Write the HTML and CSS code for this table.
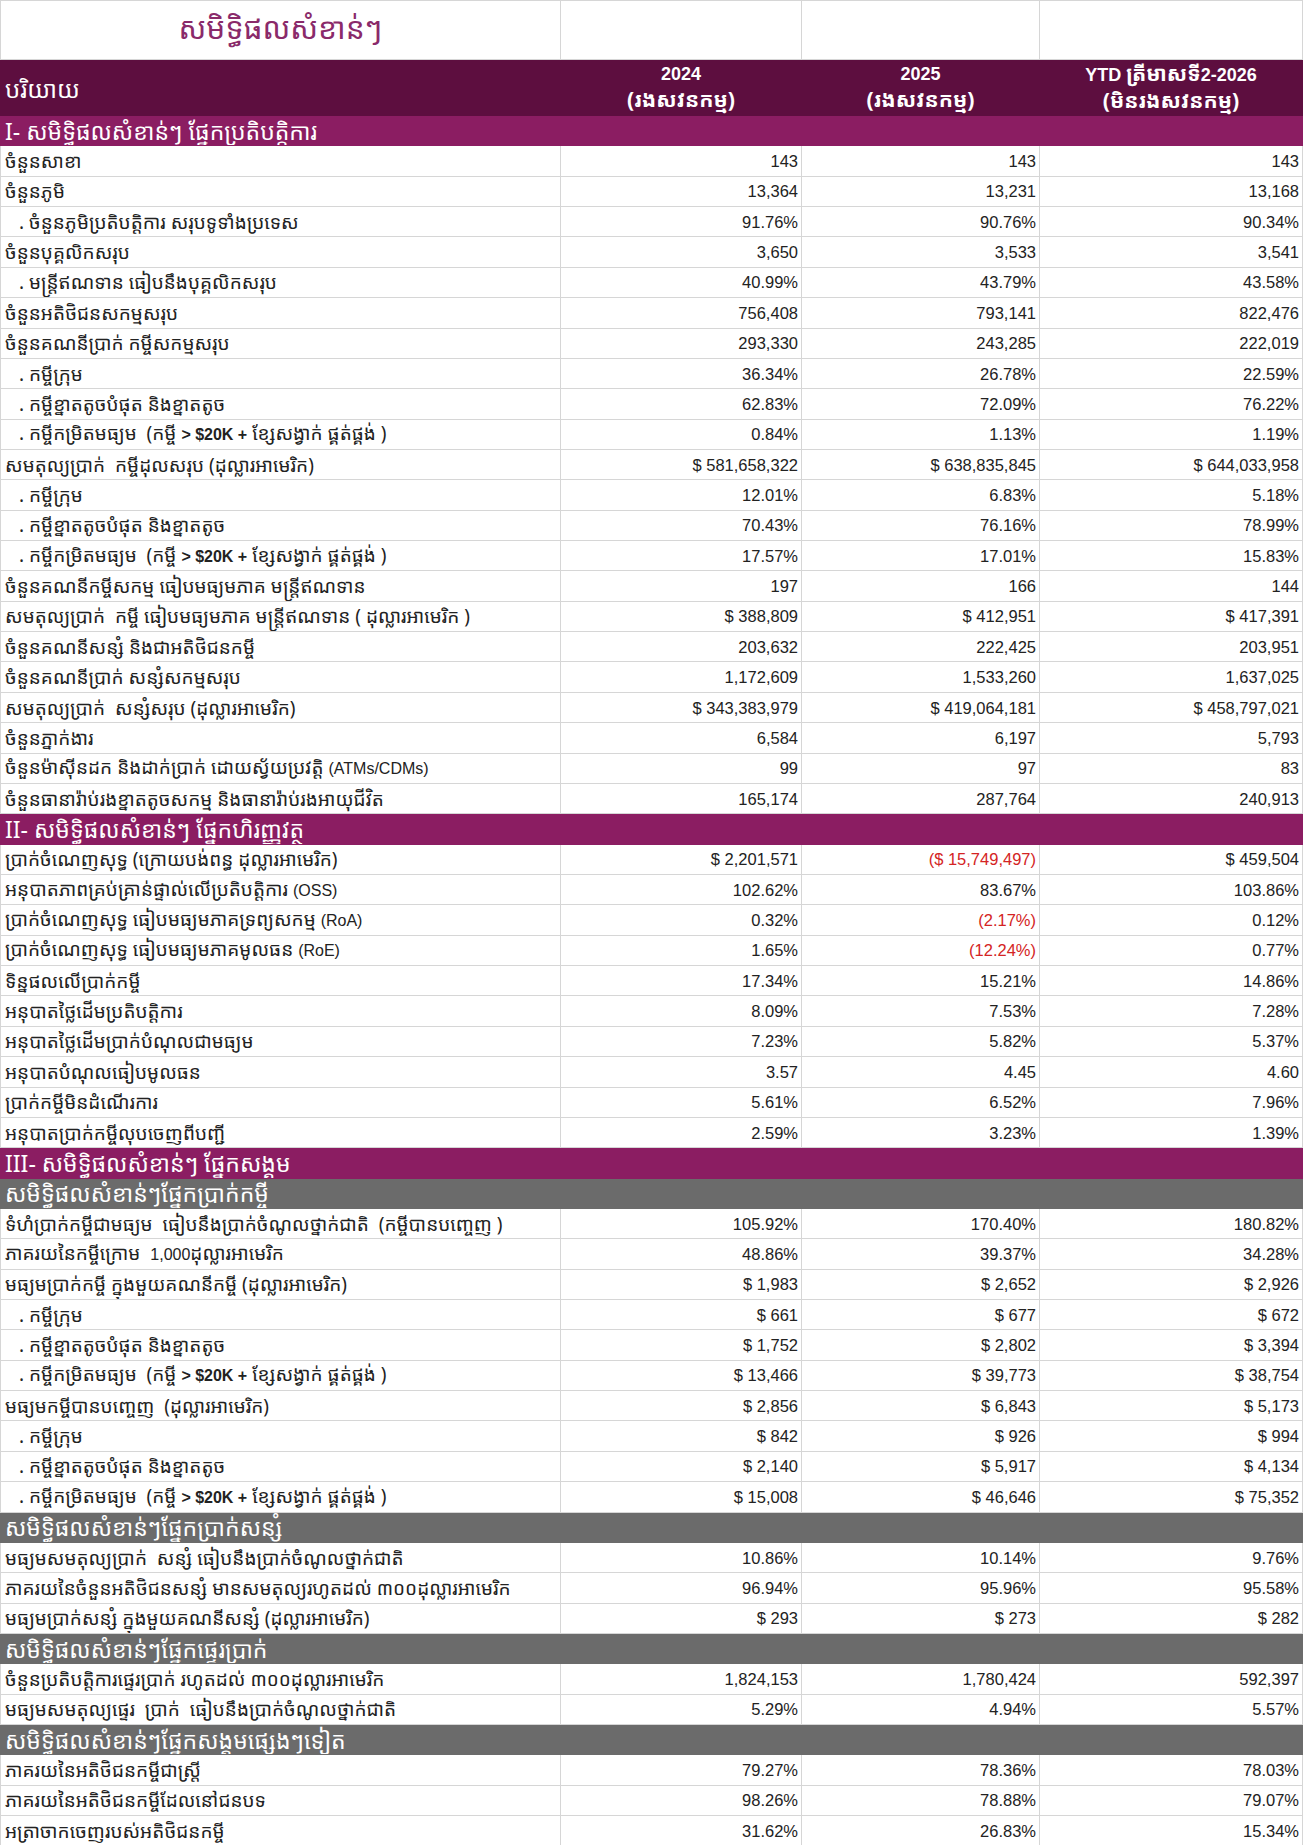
FILE: index.html
```html
<!DOCTYPE html>
<html lang="km">
<head>
<meta charset="utf-8">
<title>សមិទ្ធិផលសំខាន់ៗ</title>
<link rel="stylesheet" href="styles.css">
</head>
<body>
<table class="perf">
  <colgroup>
    <col class="c-label"><col class="c-num"><col class="c-num2"><col class="c-num3">
  </colgroup>
  <tbody>
    <tr class="title-row"><td class="title">សមិទ្ធិផលសំខាន់ៗ</td><td></td><td></td><td></td></tr>
    <tr class="head-row">
      <td class="head-label">បរិយាយ</td>
      <td class="head-col">2024<br><span class="kh">(រងសវនកម្ម)</span></td>
      <td class="head-col">2025<br><span class="kh">(រងសវនកម្ម)</span></td>
      <td class="head-col">YTD <span class="kh">ត្រីមាសទី</span>2-2026<br><span class="kh">(មិនរងសវនកម្ម)</span></td>
    </tr>
    <tr class="sec"><td colspan="4">I- សមិទ្ធិផលសំខាន់ៗ ផ្នែកប្រតិបត្តិការ</td></tr>
    <tr><td>ចំនួនសាខា</td><td>143</td><td>143</td><td>143</td></tr>
    <tr><td>ចំនួនភូមិ</td><td>13,364</td><td>13,231</td><td>13,168</td></tr>
    <tr><td class="sub">. ចំនួនភូមិប្រតិបត្តិការ សរុបទូទាំងប្រទេស</td><td>91.76%</td><td>90.76%</td><td>90.34%</td></tr>
    <tr><td>ចំនួនបុគ្គលិកសរុប</td><td>3,650</td><td>3,533</td><td>3,541</td></tr>
    <tr><td class="sub">. មន្ត្រីឥណទាន ធៀបនឹងបុគ្គលិកសរុប</td><td>40.99%</td><td>43.79%</td><td>43.58%</td></tr>
    <tr><td>ចំនួនអតិថិជនសកម្មសរុប</td><td>756,408</td><td>793,141</td><td>822,476</td></tr>
    <tr><td>ចំនួនគណនីប្រាក់ កម្ចីសកម្មសរុប</td><td>293,330</td><td>243,285</td><td>222,019</td></tr>
    <tr><td class="sub">. កម្ចីក្រុម</td><td>36.34%</td><td>26.78%</td><td>22.59%</td></tr>
    <tr><td class="sub">. កម្ចីខ្នាតតូចបំផុត និងខ្នាតតូច</td><td>62.83%</td><td>72.09%</td><td>76.22%</td></tr>
    <tr><td class="sub">. កម្ចីកម្រិតមធ្យម &nbsp;(កម្ចី <b class="lat">&gt; $20K +</b> ខ្សែសង្វាក់ ផ្គត់ផ្គង់ )</td><td>0.84%</td><td>1.13%</td><td>1.19%</td></tr>
    <tr><td>សមតុល្យប្រាក់ &nbsp;កម្ចីដុលសរុប (ដុល្លារអាមេរិក)</td><td>$ 581,658,322</td><td>$ 638,835,845</td><td>$ 644,033,958</td></tr>
    <tr><td class="sub">. កម្ចីក្រុម</td><td>12.01%</td><td>6.83%</td><td>5.18%</td></tr>
    <tr><td class="sub">. កម្ចីខ្នាតតូចបំផុត និងខ្នាតតូច</td><td>70.43%</td><td>76.16%</td><td>78.99%</td></tr>
    <tr><td class="sub">. កម្ចីកម្រិតមធ្យម &nbsp;(កម្ចី <b class="lat">&gt; $20K +</b> ខ្សែសង្វាក់ ផ្គត់ផ្គង់ )</td><td>17.57%</td><td>17.01%</td><td>15.83%</td></tr>
    <tr><td>ចំនួនគណនីកម្ចីសកម្ម ធៀបមធ្យមភាគ មន្ត្រីឥណទាន</td><td>197</td><td>166</td><td>144</td></tr>
    <tr><td>សមតុល្យប្រាក់ &nbsp;កម្ចី ធៀបមធ្យមភាគ មន្ត្រីឥណទាន ( ដុល្លារអាមេរិក )</td><td>$ 388,809</td><td>$ 412,951</td><td>$ 417,391</td></tr>
    <tr><td>ចំនួនគណនីសន្សំ និងជាអតិថិជនកម្ចី</td><td>203,632</td><td>222,425</td><td>203,951</td></tr>
    <tr><td>ចំនួនគណនីប្រាក់ សន្សំសកម្មសរុប</td><td>1,172,609</td><td>1,533,260</td><td>1,637,025</td></tr>
    <tr><td>សមតុល្យប្រាក់ &nbsp;សន្សំសរុប (ដុល្លារអាមេរិក)</td><td>$ 343,383,979</td><td>$ 419,064,181</td><td>$ 458,797,021</td></tr>
    <tr><td>ចំនួនភ្នាក់ងារ</td><td>6,584</td><td>6,197</td><td>5,793</td></tr>
    <tr><td>ចំនួនម៉ាស៊ីនដក និងដាក់ប្រាក់ ដោយស្វ័យប្រវត្តិ <span class="lat">(ATMs/CDMs)</span></td><td>99</td><td>97</td><td>83</td></tr>
    <tr><td>ចំនួនធានារ៉ាប់រងខ្នាតតូចសកម្ម និងធានារ៉ាប់រងអាយុជីវិត</td><td>165,174</td><td>287,764</td><td>240,913</td></tr>
    <tr class="sec"><td colspan="4">II- សមិទ្ធិផលសំខាន់ៗ ផ្នែកហិរញ្ញវត្ថុ</td></tr>
    <tr><td>ប្រាក់ចំណេញសុទ្ធ (ក្រោយបង់ពន្ធ ដុល្លារអាមេរិក)</td><td>$ 2,201,571</td><td class="neg">($ 15,749,497)</td><td>$ 459,504</td></tr>
    <tr><td>អនុបាតភាពគ្រប់គ្រាន់ផ្ទាល់លើប្រតិបត្តិការ <span class="lat">(OSS)</span></td><td>102.62%</td><td>83.67%</td><td>103.86%</td></tr>
    <tr><td>ប្រាក់ចំណេញសុទ្ធ ធៀបមធ្យមភាគទ្រព្យសកម្ម <span class="lat">(RoA)</span></td><td>0.32%</td><td class="neg">(2.17%)</td><td>0.12%</td></tr>
    <tr><td>ប្រាក់ចំណេញសុទ្ធ ធៀបមធ្យមភាគមូលធន <span class="lat">(RoE)</span></td><td>1.65%</td><td class="neg">(12.24%)</td><td>0.77%</td></tr>
    <tr><td>ទិន្នផលលើប្រាក់កម្ចី</td><td>17.34%</td><td>15.21%</td><td>14.86%</td></tr>
    <tr><td>អនុបាតថ្លៃដើមប្រតិបត្តិការ</td><td>8.09%</td><td>7.53%</td><td>7.28%</td></tr>
    <tr><td>អនុបាតថ្លៃដើមប្រាក់បំណុលជាមធ្យម</td><td>7.23%</td><td>5.82%</td><td>5.37%</td></tr>
    <tr><td>អនុបាតបំណុលធៀបមូលធន</td><td>3.57</td><td>4.45</td><td>4.60</td></tr>
    <tr><td>ប្រាក់កម្ចីមិនដំណើរការ</td><td>5.61%</td><td>6.52%</td><td>7.96%</td></tr>
    <tr><td>អនុបាតប្រាក់កម្ចីលុបចេញពីបញ្ជី</td><td>2.59%</td><td>3.23%</td><td>1.39%</td></tr>
    <tr class="sec"><td colspan="4">III- សមិទ្ធិផលសំខាន់ៗ ផ្នែកសង្គម</td></tr>
    <tr class="grp"><td colspan="4">សមិទ្ធិផលសំខាន់ៗផ្នែកប្រាក់កម្ចី</td></tr>
    <tr><td>ទំហំប្រាក់កម្ចីជាមធ្យម &nbsp;ធៀបនឹងប្រាក់ចំណូលថ្នាក់ជាតិ &nbsp;(កម្ចីបានបញ្ចេញ )</td><td>105.92%</td><td>170.40%</td><td>180.82%</td></tr>
    <tr><td>ភាគរយនៃកម្ចីក្រោម &nbsp;<span class="lat">1,000</span>ដុល្លារអាមេរិក</td><td>48.86%</td><td>39.37%</td><td>34.28%</td></tr>
    <tr><td>មធ្យមប្រាក់កម្ចី ក្នុងមួយគណនីកម្ចី (ដុល្លារអាមេរិក)</td><td>$ 1,983</td><td>$ 2,652</td><td>$ 2,926</td></tr>
    <tr><td class="sub">. កម្ចីក្រុម</td><td>$ 661</td><td>$ 677</td><td>$ 672</td></tr>
    <tr><td class="sub">. កម្ចីខ្នាតតូចបំផុត និងខ្នាតតូច</td><td>$ 1,752</td><td>$ 2,802</td><td>$ 3,394</td></tr>
    <tr><td class="sub">. កម្ចីកម្រិតមធ្យម &nbsp;(កម្ចី <b class="lat">&gt; $20K +</b> ខ្សែសង្វាក់ ផ្គត់ផ្គង់ )</td><td>$ 13,466</td><td>$ 39,773</td><td>$ 38,754</td></tr>
    <tr><td>មធ្យមកម្ចីបានបញ្ចេញ &nbsp;(ដុល្លារអាមេរិក)</td><td>$ 2,856</td><td>$ 6,843</td><td>$ 5,173</td></tr>
    <tr><td class="sub">. កម្ចីក្រុម</td><td>$ 842</td><td>$ 926</td><td>$ 994</td></tr>
    <tr><td class="sub">. កម្ចីខ្នាតតូចបំផុត និងខ្នាតតូច</td><td>$ 2,140</td><td>$ 5,917</td><td>$ 4,134</td></tr>
    <tr><td class="sub">. កម្ចីកម្រិតមធ្យម &nbsp;(កម្ចី <b class="lat">&gt; $20K +</b> ខ្សែសង្វាក់ ផ្គត់ផ្គង់ )</td><td>$ 15,008</td><td>$ 46,646</td><td>$ 75,352</td></tr>
    <tr class="grp"><td colspan="4">សមិទ្ធិផលសំខាន់ៗផ្នែកប្រាក់សន្សំ</td></tr>
    <tr><td>មធ្យមសមតុល្យប្រាក់ &nbsp;សន្សំ ធៀបនឹងប្រាក់ចំណូលថ្នាក់ជាតិ</td><td>10.86%</td><td>10.14%</td><td>9.76%</td></tr>
    <tr><td>ភាគរយនៃចំនួនអតិថិជនសន្សំ មានសមតុល្យរហូតដល់ ៣០០ដុល្លារអាមេរិក</td><td>96.94%</td><td>95.96%</td><td>95.58%</td></tr>
    <tr><td>មធ្យមប្រាក់សន្សំ ក្នុងមួយគណនីសន្សំ (ដុល្លារអាមេរិក)</td><td>$ 293</td><td>$ 273</td><td>$ 282</td></tr>
    <tr class="grp"><td colspan="4">សមិទ្ធិផលសំខាន់ៗផ្នែកផ្ទេរប្រាក់</td></tr>
    <tr><td>ចំនួនប្រតិបត្តិការផ្ទេរប្រាក់ រហូតដល់ ៣០០ដុល្លារអាមេរិក</td><td>1,824,153</td><td>1,780,424</td><td>592,397</td></tr>
    <tr><td>មធ្យមសមតុល្យផ្ទេរ &nbsp;ប្រាក់ &nbsp;ធៀបនឹងប្រាក់ចំណូលថ្នាក់ជាតិ</td><td>5.29%</td><td>4.94%</td><td>5.57%</td></tr>
    <tr class="grp"><td colspan="4">សមិទ្ធិផលសំខាន់ៗផ្នែកសង្គមផ្សេងៗទៀត</td></tr>
    <tr><td>ភាគរយនៃអតិថិជនកម្ចីជាស្ត្រី</td><td>79.27%</td><td>78.36%</td><td>78.03%</td></tr>
    <tr><td>ភាគរយនៃអតិថិជនកម្ចីដែលនៅជនបទ</td><td>98.26%</td><td>78.88%</td><td>79.07%</td></tr>
    <tr><td>អត្រាចាកចេញរបស់អតិថិជនកម្ចី</td><td>31.62%</td><td>26.83%</td><td>15.34%</td></tr>
  </tbody>
</table>
</body>
</html>
```

FILE: styles.css
```css
html, body {
  margin: 0;
  padding: 0;
  background: #ffffff;
}
body {
  font-family: "Noto Sans Khmer", "Khmer OS System", "Khmer OS", "Noto Serif Khmer", "DejaVu Sans", sans-serif;
  color: #222222;
}
.perf {
  width: 1302px;
  border-collapse: collapse;
  table-layout: fixed;
}
.c-label { width: 560px; }
.c-num { width: 241px; }
.c-num2 { width: 238px; }
.c-num3 { width: 263px; }

.perf td {
  box-sizing: border-box;
  height: 30.37px;
  padding: 0 4px;
  border: 1px solid #d6d6d6;
  font-size: 19px;
  line-height: 22px;
  white-space: nowrap;
  overflow: hidden;
  vertical-align: middle;
}
.perf td + td {
  text-align: right;
  font-family: "Liberation Sans", "DejaVu Sans", sans-serif;
  font-size: 16.5px;
  padding-right: 3px;
}
.perf td.sub { padding-left: 18px; }
.perf td.neg { color: #d42424; }
.lat {
  font-family: "Liberation Sans", "DejaVu Sans", sans-serif;
  font-size: 16px;
  font-weight: normal;
}
b.lat { font-weight: bold; }

.title-row td { height: 59px; border-top: 1px solid #d6d6d6; }
.perf .title {
  text-align: center;
  font-size: 30px;
  line-height: 40px;
  color: #8a2a6a;
  padding: 0 0 4px;
}
.head-row td {
  height: 56px;
  background: #5d0e3f;
  color: #ffffff;
  border-color: #5d0e3f;
}
.perf .head-label {
  font-size: 24px;
  line-height: 28px;
  padding-top: 2px;
}
.perf td.head-col {
  text-align: center;
  font-family: "Liberation Sans", "DejaVu Sans", sans-serif;
  font-size: 18px;
  font-weight: bold;
  line-height: 25px;
  padding: 0;
}
.head-col .kh {
  font-family: "Noto Sans Khmer", "Khmer OS System", sans-serif;
  font-size: 21px;
}
.sec td {
  background: #8b1d62;
  border-color: #8b1d62;
  color: #ffffff;
  font-size: 23px;
}
.grp td {
  background: #6b6b6b;
  border-color: #6b6b6b;
  color: #ffffff;
  font-size: 23px;
}
```
